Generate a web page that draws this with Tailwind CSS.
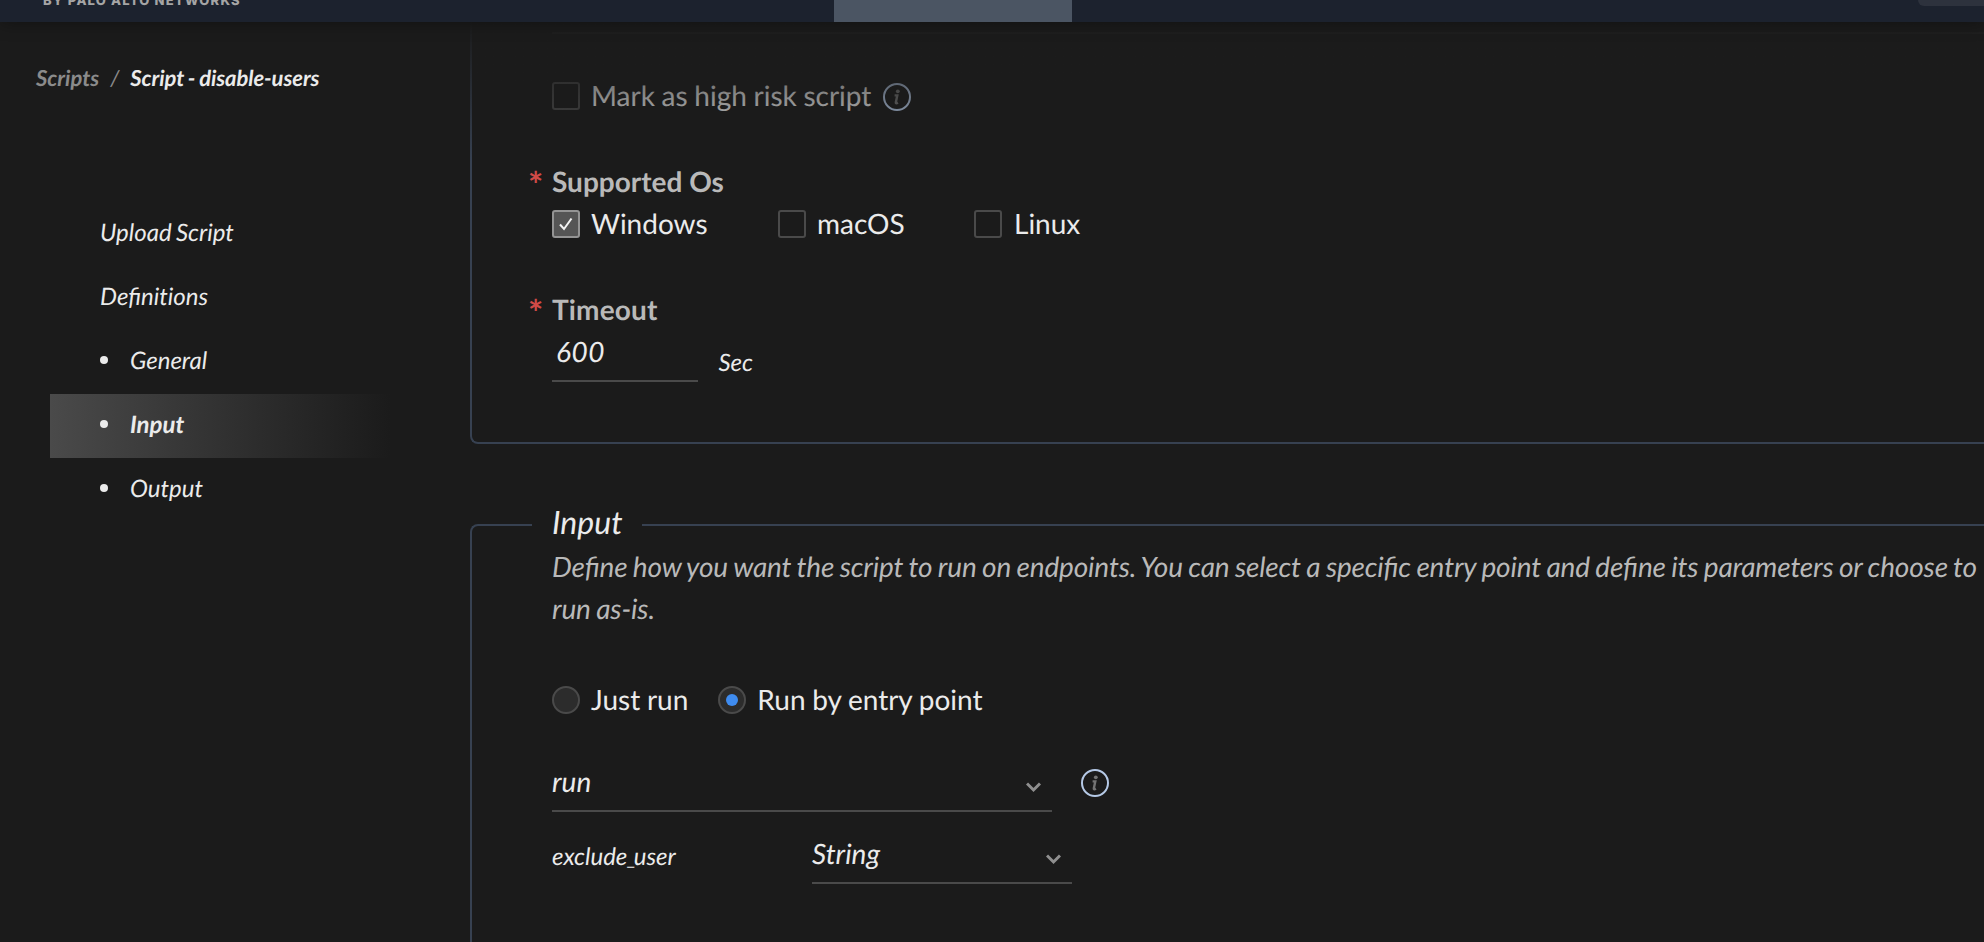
<!DOCTYPE html>
<html lang="en">
<head>
<meta charset="utf-8">
<title>Script - disable-users</title>
<script src="https://cdn.jsdelivr.net/npm/@tailwindcss/browser@4"></script>
</head>
<body class="h-[942px] w-[1984px] overflow-hidden bg-[#1b1b1b] font-['Lato',sans-serif] text-[#ebebeb] [text-rendering:geometricPrecision]">
<div class="flex h-full flex-col overflow-hidden">
  <header class="relative z-20 flex h-[22px] shrink-0 items-start bg-[#1c222e] shadow-[0_0_18px_rgba(0,0,0,0.4)]">
    <div class="-mt-[7px] w-[834px] shrink-0 pl-[43px] font-['Inter',sans-serif] text-[13px] leading-4 font-extrabold tracking-[1.2px] text-[#a5a5a5]">BY PALO ALTO NETWORKS</div>
    <div class="h-[22px] w-[238px] bg-[#4b5563]"></div>
    <div class="ml-auto h-[6px] w-[66px] rounded-bl-md bg-[#2d323d]"></div>
  </header>
  <div class="flex min-h-0 flex-1">
    <aside class="w-[470px] shrink-0 italic [word-spacing:-1.3px]">
      <nav class="flex h-[112px] items-center pb-px pl-9 text-[22px] leading-7 font-bold">
        <span class="text-[#8b8b8b]">Scripts</span>
        <span class="ml-[11px] font-normal text-[#8b8b8b]">/</span>
        <span class="ml-[11px] tracking-[-0.08px] [word-spacing:-1px]">Script - disable-users</span>
      </nav>
      <ul class="mt-[68px] ml-[50px] w-[340px] text-[24px] leading-[62px]">
        <li class="h-16 pl-[50px]">Upload Script</li>
        <li class="h-16 pl-[50px]">Definit&zwnj;ions</li>
        <li class="flex h-16 items-center pb-0.5 pl-[50px]"><i class="-mt-0.5 mr-[22px] size-2 rounded-full bg-[#ebebeb]"></i>General</li>
        <li class="flex h-16 items-center bg-linear-to-r from-[#4a4a4a] to-[#1b1b1b] pb-0.5 pl-[50px] font-bold"><i class="-mt-0.5 mr-[22px] size-2 rounded-full bg-[#ebebeb]"></i>Input</li>
        <li class="flex h-16 items-center pb-0.5 pl-[50px]"><i class="-mt-0.5 mr-[22px] size-2 rounded-full bg-[#ebebeb]"></i>Output</li>
      </ul>
    </aside>
    <main class="relative min-w-0 flex-1 text-[28px] [word-spacing:-0.5px]">
      <div class="pointer-events-none absolute inset-x-0 top-0 z-10 h-[140px] bg-linear-to-b from-[#1b1b1b] to-[#1b1b1b]/0"></div>
      <section class="-mr-10 h-[422px] rounded-bl-lg border-b-2 border-l-2 border-[#374151] pl-20">
        <div class="pt-[10px]"><div class="h-0.5 bg-[#4a4a4a]"></div></div>
        <div class="flex h-[88px] items-center pt-[36px]">
          <div class="size-7 rounded-[3px] border-2 border-[#4a4a4a]"></div>
          <div class="ml-[11px] pb-0.5 leading-8">Mark as high risk script</div>
          <svg class="mt-0.5 ml-[12px]" width="28" height="28" viewBox="0 0 28 28"><circle cx="14" cy="14" r="13" fill="none" stroke="#b5c9e6" stroke-width="2"/><circle cx="14.8" cy="8.3" r="1.9" fill="#747474"/><path d="M11.600 12.400h2.700l-1.500 7q-.2 1.600 2.200.4" fill="none" stroke="#747474" stroke-width="2.400"/></svg>
        </div>
        <div class="-ml-[24px] mt-[38px] flex h-[42px] items-center font-bold"><span class="w-[24px] pt-[6px] text-[36px] leading-[36px] text-[#cf4a47]">*</span><span class="text-[#b9b9b9] [word-spacing:0]">Supported Os</span></div>
        <div class="flex h-[42px] items-center leading-[42px]">
          <div class="flex w-[226px] items-center gap-[11px]"><div class="mt-0.5 flex size-7 items-center justify-center rounded-[3px] border-2 border-[#949494] bg-[#555555]"><svg width="24" height="24" viewBox="0 0 24 24" fill="none" stroke="#f3f3f3" stroke-width="2"><path d="M6 12.500l4 4.500 7.500-10.500"/></svg></div>Windows</div>
          <div class="flex w-[196px] items-center gap-[11px]"><div class="mt-0.5 size-7 rounded-[3px] border-2 border-[#4a4a4a]"></div>macOS</div>
          <div class="flex items-center gap-3"><div class="mt-0.5 size-7 rounded-[3px] border-2 border-[#4a4a4a]"></div>Linux</div>
        </div>
        <div class="-ml-[24px] mt-[44px] flex h-[42px] items-center font-bold"><span class="w-[24px] pt-[6px] text-[36px] leading-[36px] text-[#cf4a47]">*</span><span class="tracking-[0.15px] text-[#b9b9b9]">Timeout</span></div>
        <div class="flex h-[52px] italic">
          <div class="w-[146px] border-b-2 border-[#4a4a4a] pl-1 leading-[42px] tracking-[0.5px]">600</div>
          <div class="ml-[20.500px] pt-[12px] text-[24px] leading-[42px]">Sec</div>
        </div>
      </section>
      <section class="relative mt-20 -mr-10 h-[440px] rounded-tl-lg border-t-2 border-l-2 border-[#374151] pl-20">
        <h2 class="absolute -top-[24px] left-[60px] bg-[#1b1b1b] px-5 text-[32px] leading-10 italic">Input</h2>
        <p class="pt-[19px] pb-px leading-[42px] tracking-[-0.16px] whitespace-nowrap text-[#b9b9b9] italic [font-feature-settings:'liga'] [word-spacing:-0.95px]">Define how you want the script to run on endpoints. You can select a specific entry point and define its parameters or choose to<br>run as-is.</p>
        <div class="mt-[49px] flex h-[42px] items-center">
          <div class="size-7 rounded-full border-2 border-[#4a4a4a] bg-[#2c2c2c]"></div><span class="ml-[11px] pb-0.5">Just run</span>
          <div class="ml-[30px] flex size-7 items-center justify-center rounded-full border-2 border-[#4a4a4a] bg-[#2c2c2c]"><div class="size-3 rounded-full bg-[#3f8cf0]"></div></div><span class="ml-[11px] pb-0.5">Run by entry point</span>
        </div>
        <div class="mt-[39px] flex h-[52px] italic">
          <div class="flex w-[500px] justify-between border-b-2 border-[#4a4a4a] pr-[11px] leading-[43px]">run<svg class="mt-[22px]" width="15" height="15" viewBox="0 0 15 15" fill="none" stroke="#8f8f8f" stroke-width="3"><path d="M1 1.500l6.500 6.500L14 1.500"/></svg></div>
          <svg class="ml-[29px] mt-[9px]" width="28" height="28" viewBox="0 0 28 28"><circle cx="14" cy="14" r="13" fill="none" stroke="#b5c9e6" stroke-width="2"/><circle cx="14.8" cy="8.3" r="1.9" fill="#747474"/><path d="M11.600 12.400h2.700l-1.500 7q-.2 1.600 2.200.4" fill="none" stroke="#747474" stroke-width="2.400"/></svg>
        </div>
        <div class="mt-5 flex h-[52px] italic">
          <div class="w-[260px] pt-[4px] text-[24px] leading-[42px]">exclude<span class="text-[20px] leading-none tracking-[-2.500px]">_</span>user</div>
          <div class="flex w-[260px] justify-between border-b-2 border-[#4a4a4a] pr-[11px] leading-[42px]">String<svg class="mt-[22px]" width="15" height="15" viewBox="0 0 15 15" fill="none" stroke="#8f8f8f" stroke-width="3"><path d="M1 1.500l6.500 6.500L14 1.500"/></svg></div>
        </div>
      </section>
    </main>
  </div>
</div>
</body>
</html>
